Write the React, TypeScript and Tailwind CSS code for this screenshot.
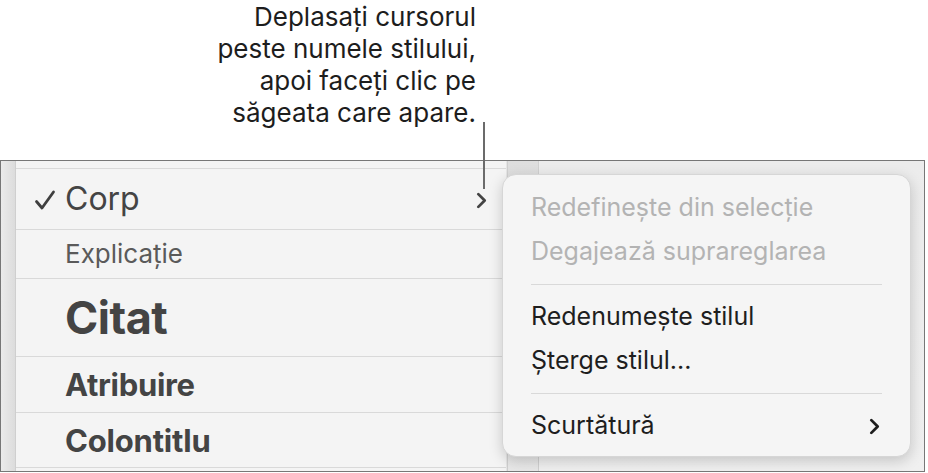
import React from "react";

const font = { fontFamily: "Inter, 'Noto Sans', sans-serif" };

// left list of paragraph styles
const StyleRow = ({ children, className }: { children: React.ReactNode; className: string }) => (
  <div className={`flex items-center border-b border-[#d9d9d9] pl-[49px] ${className}`}>{children}</div>
);

const Chevron = ({ className }: { className: string }) => (
  <svg viewBox="0 0 12 16" className={className} fill="none">
    <path d="M3 2l6 6-6 6" stroke="currentColor" strokeWidth="2.6" strokeLinecap="round" strokeLinejoin="round" />
  </svg>
);

export default function App() {
  return (
    <div className="relative w-[928px] h-[473px] bg-white overflow-hidden" style={font}>
      {/* callout */}
      <div className="h-[160px] w-[476px] pt-[1px] text-right text-[26px] leading-[32px] text-[#1d1d1d]">
        <p>Deplasați cursorul</p>
        <p>peste numele stilului,</p>
        <p>apoi faceți clic pe</p>
        <p>săgeata care apare.</p>
      </div>
      <div className="absolute left-[483px] top-[122px] w-[1.5px] h-[67px] bg-[#6b6b6b]" />

      {/* window */}
      <div className="flex w-[925px] h-[312px] border border-[#777]">
        <div className="w-[15px] bg-gradient-to-r from-[#ebebeb] to-[#dcdcdc] border-r border-[#cfcfcf]" />
        <div className="w-[490px] flex flex-col bg-[#f4f4f4] text-[#4a4a4a]">
          <div className="h-[8px] border-b border-[#dadada]" />
          <StyleRow className="h-[61px] relative">
            <svg viewBox="0 0 22 22" className="absolute left-[18px] top-[20px] w-[22px] h-[22px]" fill="none">
              <path d="M2.5 12.5l5.5 6.5L19.5 3" stroke="#3f3f3f" strokeWidth="2.8" strokeLinecap="round" strokeLinejoin="round" />
            </svg>
            <span className="text-[32px] font-normal text-[#444] leading-none">Corp</span>
            <Chevron className="absolute left-[459px] top-[23px] w-[13px] h-[17px] text-[#444]" />
          </StyleRow>
          <StyleRow className="h-[49px]">
            <span className="text-[26px] text-[#5a5a5a] leading-none">Explicație</span>
          </StyleRow>
          <StyleRow className="h-[78px]">
            <span className="text-[45px] font-bold text-[#444] leading-none tracking-[-0.5px]">Citat</span>
          </StyleRow>
          <StyleRow className="h-[56px]">
            <span className="text-[31px] font-bold text-[#444] leading-none tracking-[-0.3px]">Atribuire</span>
          </StyleRow>
          <StyleRow className="h-[55px]">
            <span className="text-[31px] font-bold text-[#444] leading-none tracking-[-0.2px]">Colontitlu</span>
          </StyleRow>
        </div>
        <div className="w-[2px] bg-[#e6e6e6] border-r border-[#cfcfcf]" />
        <div className="w-[31px] bg-gradient-to-b from-[#dedede] to-[#e8e8e8] border-r border-[#d0d0d0]" />
        <div className="flex-1 bg-gradient-to-b from-[#ececec] to-[#f0f0f0]" />
      </div>

      {/* context menu */}
      <div className="absolute left-[502px] top-[174px] w-[409px] h-[283px] rounded-[14px] bg-[#f5f5f5] border border-[#d6d6d6] shadow-[0_4px_14px_rgba(0,0,0,0.18)] px-[28px] pt-[11px] text-[25px]">
        <div className="h-[44px] flex items-center text-[#b3b3b3]">Redefinește din selecție</div>
        <div className="h-[44px] flex items-center text-[#b3b3b3]">Degajează suprareglarea</div>
        <div className="h-[21px] flex items-center">
          <div className="h-px w-full bg-[#d9d9d9]" />
        </div>
        <div className="h-[44px] flex items-center text-[#1e1e1e]">Redenumește stilul</div>
        <div className="h-[44px] flex items-center text-[#1e1e1e]">Șterge stilul...</div>
        <div className="h-[21px] flex items-center">
          <div className="h-px w-full bg-[#d9d9d9]" />
        </div>
        <div className="h-[44px] flex items-center justify-between text-[#1e1e1e]">
          <span>Scurtătură</span>
          <Chevron className="w-[13px] h-[17px] mr-[1px] text-[#1e1e1e]" />
        </div>
      </div>
    </div>
  );
}
